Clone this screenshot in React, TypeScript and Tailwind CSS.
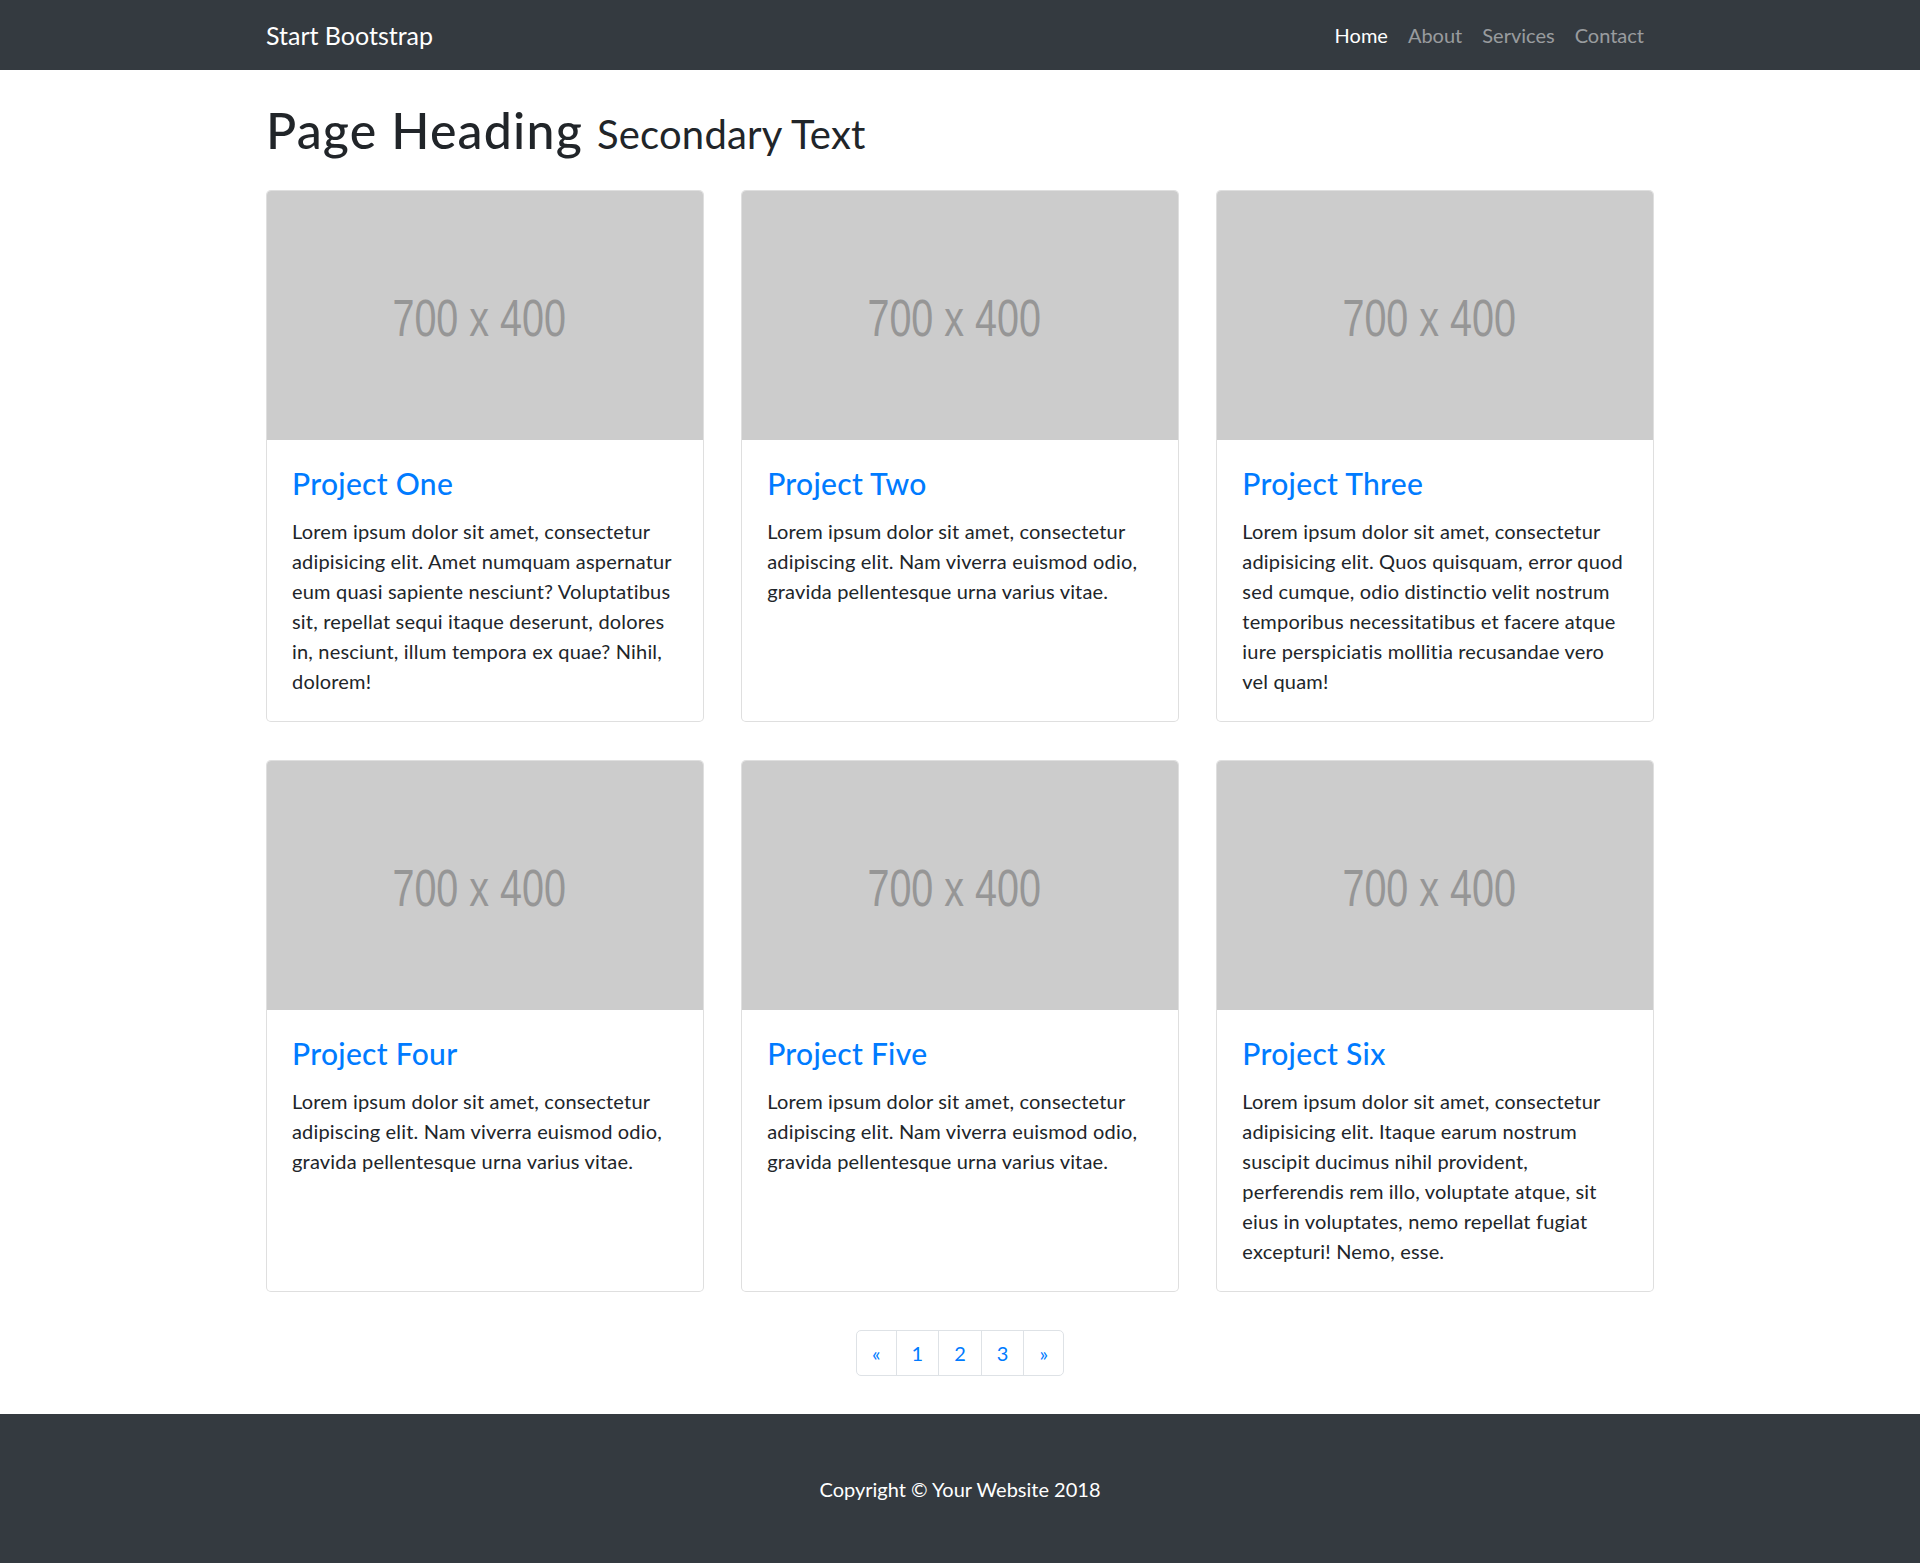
import React from "react";

type Project = { title: string; text: string };

const projects: Project[] = [
  {
    title: "Project One",
    text: "Lorem ipsum dolor sit amet, consectetur adipisicing elit. Amet numquam aspernatur eum quasi sapiente nesciunt? Voluptatibus sit, repellat sequi itaque deserunt, dolores in, nesciunt, illum tempora ex quae? Nihil, dolorem!",
  },
  {
    title: "Project Two",
    text: "Lorem ipsum dolor sit amet, consectetur adipiscing elit. Nam viverra euismod odio, gravida pellentesque urna varius vitae.",
  },
  {
    title: "Project Three",
    text: "Lorem ipsum dolor sit amet, consectetur adipisicing elit. Quos quisquam, error quod sed cumque, odio distinctio velit nostrum temporibus necessitatibus et facere atque iure perspiciatis mollitia recusandae vero vel quam!",
  },
  {
    title: "Project Four",
    text: "Lorem ipsum dolor sit amet, consectetur adipiscing elit. Nam viverra euismod odio, gravida pellentesque urna varius vitae.",
  },
  {
    title: "Project Five",
    text: "Lorem ipsum dolor sit amet, consectetur adipiscing elit. Nam viverra euismod odio, gravida pellentesque urna varius vitae.",
  },
  {
    title: "Project Six",
    text: "Lorem ipsum dolor sit amet, consectetur adipisicing elit. Itaque earum nostrum suscipit ducimus nihil provident, perferendis rem illo, voluptate atque, sit eius in voluptates, nemo repellat fugiat excepturi! Nemo, esse.",
  },
];

const font = "font-['Lato','Noto_Sans',sans-serif]";

function Placeholder() {
  return (
    <div className="h-[249px] bg-[#cccccc] rounded-t-[4px] flex items-center justify-center">
      <span className="font-['Liberation_Sans',Arial,sans-serif] text-[52px] leading-none text-[#969696] scale-x-[0.76] -translate-x-[6px] translate-y-[2px] whitespace-nowrap">
        700 x 400
      </span>
    </div>
  );
}

function ProjectCard({ p }: { p: Project }) {
  return (
    <div className="h-full flex flex-col bg-white border border-[rgba(0,0,0,0.125)] rounded-[5px]">
      <a href="#">
        <Placeholder />
      </a>
      <div className="flex-1 p-[25px]">
        <h4 className="text-[30px] leading-[36px] font-medium mb-[15px] tracking-[0.3px]">
          <a href="#" className="text-[#007bff]">
            {p.title}
          </a>
        </h4>
        <p className="text-[20px] leading-[30px] text-[#212529] tracking-[0.18px]">{p.text}</p>
      </div>
    </div>
  );
}

export default function App() {
  const pages = ["«", "1", "2", "3", "»"];
  return (
    <div className={`${font} min-h-screen bg-white text-[#212529] flex flex-col`}>
      <nav className="h-[70px] bg-[#343a40]">
        <div className="w-[1388px] mx-auto h-full flex items-center justify-between">
          <a href="#" className="text-white text-[25px] leading-[37px]">
            Start Bootstrap
          </a>
          <ul className="flex items-center text-[20px] leading-[30px]">
            <li>
              <a href="#" className="px-[10px] text-white">
                Home
              </a>
            </li>
            <li>
              <a href="#" className="px-[10px] text-[rgba(255,255,255,0.5)]">
                About
              </a>
            </li>
            <li>
              <a href="#" className="px-[10px] text-[rgba(255,255,255,0.5)]">
                Services
              </a>
            </li>
            <li>
              <a href="#" className="px-[10px] text-[rgba(255,255,255,0.5)]">
                Contact
              </a>
            </li>
          </ul>
        </div>
      </nav>

      <main className="w-[1388px] mx-auto flex-1">
        <h1 className="my-[30px] h-[60px] flex items-baseline gap-[14px] text-[50px] leading-[60px] font-medium">
          <span className="tracking-[1.2px]">Page Heading</span>
          <small className="text-[40px] leading-none font-normal tracking-[0.2px]">Secondary Text</small>
        </h1>

        <div className="grid grid-cols-3 gap-x-[37.5px] gap-y-[38px]">
          {projects.map((p) => (
            <ProjectCard key={p.title} p={p} />
          ))}
        </div>

        <ul className="flex justify-center mt-[38px] mb-[38px]">
          {pages.map((label, i) => (
            <li key={label}>
              <a
                href="#"
                className={`block px-[15px] h-[46px] leading-[44px] text-[20px] text-[#007bff] border border-[#dee2e6] ${
                  i === 0 ? "rounded-l-[5px]" : "-ml-px"
                } ${i === pages.length - 1 ? "rounded-r-[5px]" : ""}`}
              >
                {label}
              </a>
            </li>
          ))}
        </ul>
      </main>

      <footer className="py-[60px] bg-[#343a40]">
        <p className="text-center text-white text-[20px] leading-[30px]">Copyright © Your Website 2018</p>
      </footer>
    </div>
  );
}
